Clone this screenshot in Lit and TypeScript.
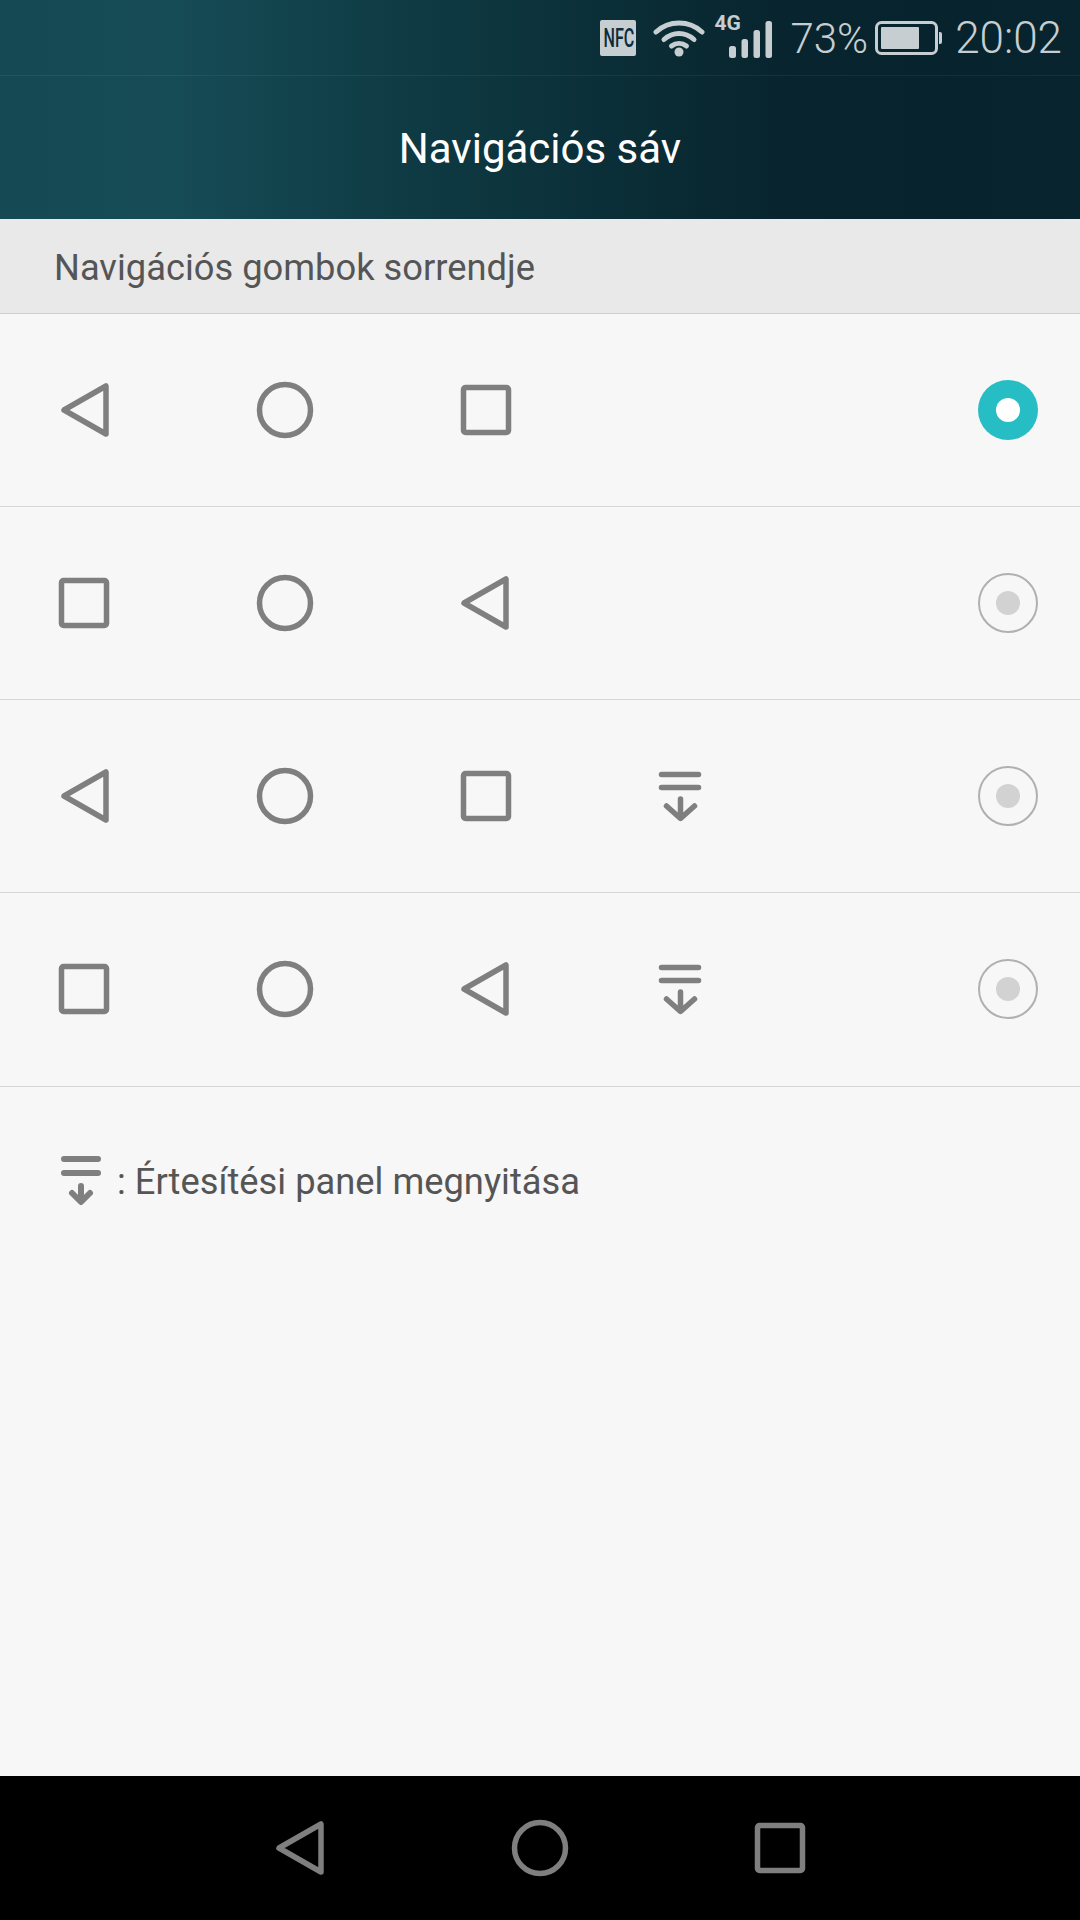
import { LitElement, html, css, svg } from "lit";
import { customElement } from "lit/decorators.js";

type Glyph = "back" | "backEnd" | "backNav" | "home" | "recent" | "fold" | "foldNote";

const glyphs: Record<Glyph, unknown> = {
  back: svg`<path d="M12 32 54 8V56Z" />`,
  backEnd: svg`<path d="M10 32 52 8V56Z" />`,
  backNav: svg`<path d="M11 32 53 8V56Z" />`,
  home: svg`<circle cx="32" cy="32" r="25.5" />`,
  recent: svg`<rect x="9.5" y="9.5" width="45" height="45" rx="2" />`,
  fold: svg`<path d="M12.500 10.500H49.500M12.500 23.500H49.500" /><path d="M31.500 35V54M17.500 42 31.500 54.500 45.500 42" />`,
  foldNote: svg`<path d="M15 10H49M15 24H49" /><path d="M32 37V52M23 44 32 53 41 44" />`,
};

const rows: { icons: Glyph[]; selected?: boolean }[] = [
  { icons: ["back", "home", "recent"], selected: true },
  { icons: ["recent", "home", "backEnd"] },
  { icons: ["back", "home", "recent", "fold"] },
  { icons: ["recent", "home", "backEnd", "fold"] },
];

const icon = (g: Glyph) =>
  html`<svg class="icon" viewBox="0 0 64 64">${glyphs[g]}</svg>`;

@customElement("app-root")
export class AppRoot extends LitElement {
  static styles = css`
    :host {
      display: block;
      width: 1080px;
      height: 1920px;
      font-family: Roboto, "Liberation Sans", sans-serif;
    }
    .screen {
      display: flex;
      flex-direction: column;
      height: 100%;
      background: #f7f7f7;
    }
    .header {
      height: 219px;
      flex: none;
      background: linear-gradient(90deg, #154a54 0, #164c56 170px, #0f3b44 400px, #0a2c35 650px, #08242e 800px, #07232d 950px, #08252f 1080px);
      color: #fff;
    }
    .status {
      display: flex;
      align-items: center;
      justify-content: flex-end;
      height: 76px;
      padding: 1px 18px 0 0;
      box-sizing: border-box;
      border-bottom: 1px solid rgba(255, 255, 255, 0.06);
      color: #c6ced1;
      font-size: 42px;
      font-weight: 300;
    }
    .status svg {
      display: block;
      flex: none;
    }
    .nfc {
      width: 36px;
      height: 36px;
      flex: none;
      margin-right: 17px;
      border-radius: 2px;
      background: #c6ced1;
      display: flex;
      align-items: center;
      justify-content: center;
      color: #0c2d37;
      font-size: 26px;
      font-weight: 500;
      line-height: 1;
    }
    .nfc span {
      margin: 0 -9px;
      transform: scaleX(0.62);
    }
    .wifi {
      margin-right: 9px;
    }
    .signal {
      position: relative;
      margin-right: 14px;
    }
    .net {
      position: absolute;
      left: 0;
      top: -3px;
      font-size: 21px;
      font-weight: 700;
      line-height: 21px;
    }
    .pct {
      margin-right: 7px;
    }
    .batt {
      margin-right: 12px;
    }
    .time {
      font-size: 44px;
    }
    .title {
      height: 143px;
      display: flex;
      align-items: center;
      justify-content: center;
      font-size: 42px;
      padding-top: 1px;
      box-sizing: border-box;
    }
    .sub {
      height: 95px;
      flex: none;
      box-sizing: border-box;
      display: flex;
      align-items: center;
      padding: 3px 0 0 54px;
      background: #e9e9e9;
      border-bottom: 1px solid #cfcfcf;
      color: #555;
      font-size: 36.300px;
    }
    .row {
      height: 193px;
      box-sizing: border-box;
      display: grid;
      grid-template-columns: 201px 201px 195px 64px 1fr auto;
      align-items: center;
      padding: 0 42px 0 52px;
      border-bottom: 1px solid #d6d6d6;
    }
    .row:last-child {
      height: 194px;
      padding-bottom: 1px;
    }
    .icon {
      display: block;
      width: 64px;
      height: 64px;
      overflow: visible;
      fill: none;
      stroke: #7f7f7f;
      stroke-width: 5.500;
      stroke-linejoin: round;
      stroke-linecap: round;
    }
    .radio {
      grid-column: 6;
      width: 60px;
      height: 60px;
      box-sizing: border-box;
      border-radius: 50%;
      border: 2px solid #b0b0b0;
      display: flex;
      align-items: center;
      justify-content: center;
    }
    .radio i {
      display: block;
      width: 24px;
      height: 24px;
      border-radius: 50%;
      background: #d2d2d2;
    }
    .radio.on {
      border: none;
      background: #26bdc5;
    }
    .radio.on i {
      background: #fff;
    }
    .note {
      flex: 1;
      display: flex;
      align-items: flex-start;
      padding: 62px 0 0 49px;
      color: #555;
      font-size: 36.300px;
    }
    .note .icon {
      margin-right: 4px;
      stroke-width: 6;
    }
    .note span {
      line-height: 64px;
      padding-top: 1px;
    }
    .nav {
      height: 144px;
      flex: none;
      background: #000;
      display: flex;
      align-items: center;
      justify-content: center;
      gap: 176px;
    }
  `;

  render() {
    return html`
      <div class="screen">
        <div class="header">
          <div class="status">
            <div class="nfc"><span>NFC</span></div>
            <svg class="wifi" width="52" height="38" viewBox="0 0 52 38" fill="none" stroke="#c6ced1" stroke-width="5" stroke-linecap="round">
              <path d="M3 13C16 1 36 1 49 13" />
              <path d="M11 20.500C20 12.500 32 12.500 41 20.500" />
              <path d="M18.500 27C23 23.500 29 23.500 33.500 27" />
              <circle cx="26" cy="33" r="4.500" fill="#c6ced1" stroke="none" />
            </svg>
            <div class="signal">
              <svg width="62" height="44" viewBox="0 0 62 44" fill="#c6ced1">
                <rect x="15" y="30" width="7" height="12" rx="2.500" />
                <rect x="27.500" y="23" width="6.500" height="19" rx="2.500" />
                <rect x="39.500" y="14" width="6.500" height="28" rx="2.500" />
                <rect x="51.500" y="5" width="6.500" height="37" rx="2.500" />
              </svg>
              <span class="net">4G</span>
            </div>
            <span class="pct">73%</span>
            <svg class="batt" width="68" height="34" viewBox="0 0 68 34">
              <rect x="1.500" y="1.500" width="60" height="31" rx="5" fill="none" stroke="#c6ced1" stroke-width="3" />
              <rect x="6" y="6" width="38" height="22" rx="1" fill="#c6ced1" />
              <path d="M64 11h1a2 2 0 0 1 2 2v8a2 2 0 0 1-2 2h-1z" fill="#c6ced1" />
            </svg>
            <span class="time">20:02</span>
          </div>
          <div class="title">Navigációs sáv</div>
        </div>
        <div class="sub">Navigációs gombok sorrendje</div>
        <div class="rows">
          ${rows.map(
            (r) => html`
              <div class="row">
                ${r.icons.map((g) => icon(g))}
                <div class="radio ${r.selected ? "on" : ""}"><i></i></div>
              </div>
            `
          )}
        </div>
        <div class="note">${icon("foldNote")}<span>: Értesítési panel megnyitása</span></div>
        <div class="nav">${icon("backNav")}${icon("home")}${icon("recent")}</div>
      </div>
    `;
  }
}
